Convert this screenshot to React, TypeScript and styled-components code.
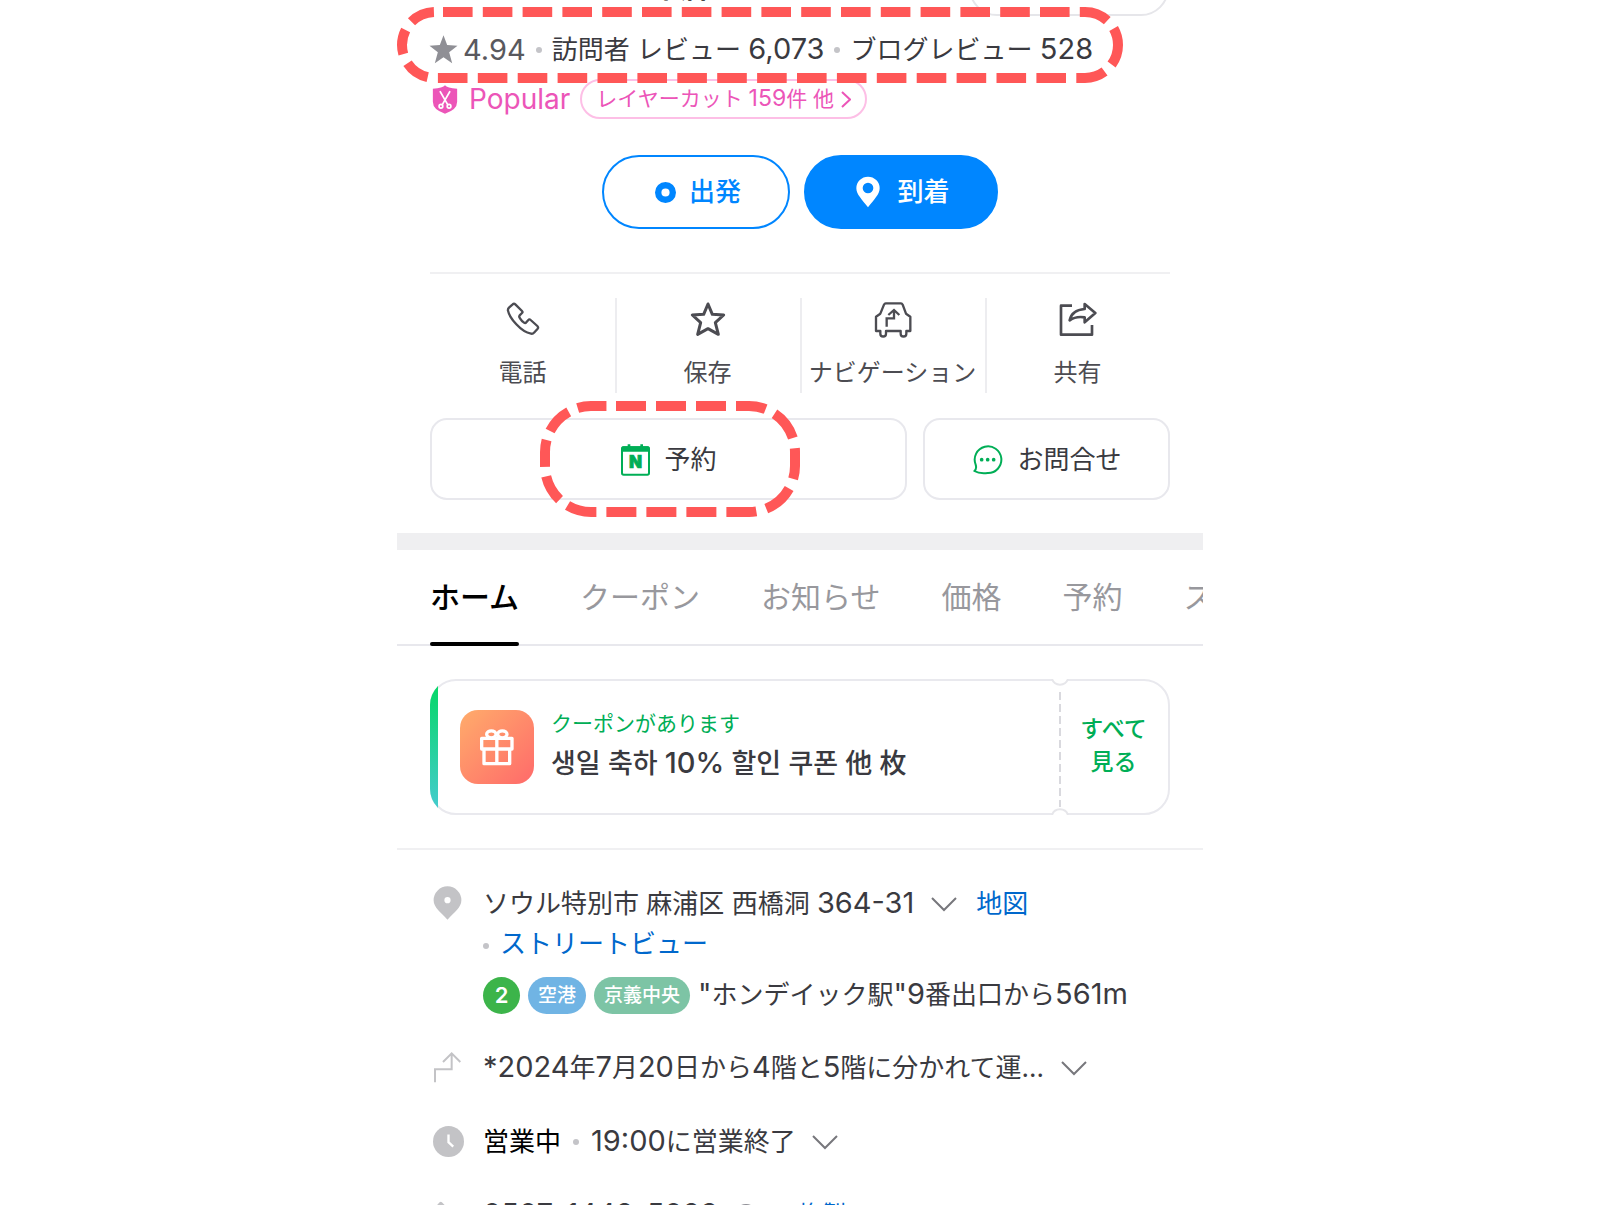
import React from "react";
import styled, { createGlobalStyle, css } from "styled-components";

const sans = `Inter, "Noto Sans CJK JP", "Noto Sans CJK KR", sans-serif`;

const GlobalStyle = createGlobalStyle`
  *, *::before, *::after { box-sizing: border-box; }
  body { margin: 0; background: #fff; color: #3a3a40; font-family: ${sans}; -webkit-font-smoothing: antialiased; }
  button { font: inherit; color: inherit; background: none; border: 0; padding: 0; cursor: pointer; white-space: nowrap; }
  a { color: inherit; text-decoration: none; }
  svg { display: block; flex: none; }
  h1, p { margin: 0; }
`;

const Shell = styled.div`
  height: 100vh;
  overflow: hidden;
`;

const Page = styled.main`
  width: 100%;
  max-width: 806px;
  margin: 0 auto;
`;

const Inset = styled.div`
  padding: 0 33px;
`;

/* Latin figures are set a little larger than the kana and kanji around them. */
const Num = styled.span<{ $size?: number }>`
  font-size: ${(p) => p.$size ?? 29}px;
  line-height: 1;
`;

/* ---------- heading ---------- */

const TitleBar = styled.header`
  display: flex;
  align-items: flex-end;
  justify-content: space-between;
  height: 16px;
  padding: 0 34px 0 255px;
`;

const Title = styled.h1`
  padding-bottom: 8px;
  font-size: 28px;
  line-height: 40px;
  font-weight: 600;
  color: #111;
`;

const TitlePill = styled.button`
  width: 200px;
  height: 56px;
  border: 2px solid #e6e6ea;
  border-radius: 28px;
`;

const Reviews = styled.div`
  position: relative;
  display: flex;
  align-items: center;
  height: 63px;
  padding: 4px 33px 0 32px;
  font-size: 26px;
  line-height: 40px;
  white-space: nowrap;
`;

const Rating = styled.span`
  display: flex;
  align-items: center;
  gap: 5px;
  color: #59595e;
`;

const Dot = styled.span<{ $gap?: number }>`
  flex: none;
  width: 6px;
  height: 6px;
  margin: 0 ${(p) => p.$gap ?? 10}px;
  border-radius: 50%;
  background: #c4c4c8;
`;

const Ring = styled.svg<{ $x: number; $y: number }>`
  position: absolute;
  left: ${(p) => p.$x}px;
  top: ${(p) => p.$y}px;
  pointer-events: none;
  z-index: 1;
`;

const Popular = styled.div`
  display: flex;
  align-items: center;
  height: 40px;
  padding: 0 35px;
  color: #ec55b8;
`;

const PopularName = styled.span`
  margin: 0 10px 0 11px;
  font-size: 28px;
  line-height: 40px;
`;

const PopularPill = styled.button`
  display: flex;
  align-items: center;
  gap: 7px;
  height: 40px;
  padding: 0 14px;
  border: 2px solid #fdbfe6;
  border-radius: 20px;
  font-size: 21px;
  line-height: 34px;
`;

const Trip = styled.div`
  display: flex;
  justify-content: center;
  gap: 14px;
  margin-top: 36px;
`;

const TripButton = styled.button<{ $filled?: boolean }>`
  display: flex;
  align-items: center;
  justify-content: center;
  gap: ${(p) => (p.$filled ? 17 : 13)}px;
  width: ${(p) => (p.$filled ? 194 : 188)}px;
  height: 74px;
  padding-left: 4px;
  border: 2px solid #0086ff;
  border-radius: 37px;
  background: ${(p) => (p.$filled ? "#0086ff" : "#fff")};
  color: ${(p) => (p.$filled ? "#fff" : "#0086ff")};
  font-size: 26px;
  line-height: 40px;
  font-weight: 500;
`;

const Rule = styled.hr<{ $gap: number }>`
  height: 2px;
  margin: ${(p) => p.$gap}px 0 0;
  border: 0;
  background: #f0f0f2;
`;

const Tools = styled.div`
  display: grid;
  grid-template-columns: repeat(4, 1fr);
  margin-top: 24px;
`;

const Tool = styled.button`
  display: flex;
  flex-direction: column;
  align-items: center;
  justify-content: space-between;
  height: 95px;
  padding: 3px 0 1px;
  font-size: 24px;
  line-height: 38px;
  color: #4c4c52;
  & + & { box-shadow: inset 2px 0 #ededf0; }
`;

const Booking = styled.div`
  position: relative;
  display: grid;
  grid-template-columns: 477fr 247fr;
  gap: 16px;
  margin-top: 25px;
`;

const BookingButton = styled.button`
  display: flex;
  align-items: center;
  justify-content: center;
  gap: 14px;
  height: 82px;
  padding: 1px 0 0 1px;
  border: 2px solid #e8e8ed;
  border-radius: 17px;
  font-size: 26px;
  line-height: 40px;
`;

const Band = styled.div`
  height: 17px;
  margin-top: 33px;
  background: #efeff1;
`;

/* ---------- tabs ---------- */

const Tabs = styled.nav`
  display: flex;
  gap: 61px;
  height: 96px;
  padding-left: 33px;
  overflow: hidden;
  box-shadow: inset 0 -2px #e8e8ed;
`;

const Tab = styled.a<{ $active?: boolean }>`
  position: relative;
  flex: none;
  font-size: 30px;
  line-height: 94px;
  color: #98989d;
  ${(p) =>
    p.$active &&
    css`
      color: #000;
      font-weight: 500;
      &::after {
        content: "";
        position: absolute;
        inset: auto 0 0;
        height: 4px;
        border-radius: 2px;
        background: #000;
      }
    `}
`;

/* ---------- coupon ---------- */

const CouponWrap = styled.div`
  position: relative;
`;

const Coupon = styled.section`
  display: flex;
  height: 136px;
  margin-top: 33px;
  border: 2px solid #e9e9ee;
  border-radius: 26px;
  background: #fff;
`;

const Stripe = styled.div`
  position: absolute;
  inset: 0;
  border-radius: 26px;
  overflow: hidden;
  pointer-events: none;
  &::before {
    content: "";
    display: block;
    width: 8px;
    height: 100%;
    background: linear-gradient(#03d862, #48cbd3);
  }
`;

const CouponBody = styled.div`
  flex: 1;
  display: flex;
  align-items: center;
  gap: 17px;
  padding-left: 28px;
`;

const GiftTile = styled.div`
  display: grid;
  place-items: center;
  width: 74px;
  height: 74px;
  border-radius: 18px;
  background: linear-gradient(135deg, #ffac6b, #ff6a6a);
`;

const CouponNote = styled.p`
  margin-bottom: 4px;
  font-size: 21px;
  line-height: 30px;
  color: #00ae56;
`;

const CouponName = styled.p`
  font-size: 27px;
  line-height: 42px;
  font-weight: 500;
`;

const SeeAll = styled.button`
  width: 109px;
  padding-bottom: 2px;
  font-size: 23px;
  line-height: 33px;
  font-weight: 500;
  color: #00ae56;
`;

const Perforation = styled.svg`
  position: absolute;
  right: 98px;
  top: 0;
`;

/* ---------- details ---------- */

const Details = styled.dl`
  display: flex;
  flex-direction: column;
  gap: 33px;
  margin: 0;
  padding: 33px 33px 0 36px;
  font-size: 26px;
  line-height: 40px;
`;

const Detail = styled.div`
  display: grid;
  grid-template-columns: 50px 1fr;
`;

const DetailIcon = styled.dt`
  display: flex;
  align-items: center;
  height: 40px;
`;

const DetailBody = styled.dd`
  margin: 0;
  padding-top: 1px;
`;

const Line = styled.div`
  display: flex;
  align-items: center;
  height: 40px;
  white-space: nowrap;
`;

const StationLine = styled(Line)`
  gap: 8px;
  height: 38px;
  margin-top: 12px;
`;

const PhoneLine = styled(Line)`
  height: 34px;
`;

const BlueLink = styled.a`
  color: #0068cc;
`;

const LineDot = styled(Dot)`
  margin: 4px 11px 0 0;
`;

const Toggle = styled.button<{ $gap: number }>`
  margin: 0 19px 0 ${(p) => p.$gap}px;
`;

const Open = styled.span`
  color: #000;
`;

const InfoButton = styled.button`
  margin: 6px 40px 0 16px;
`;

const CopyLink = styled(BlueLink)`
  padding-top: 4px;
  font-size: 24px;
`;

const Badge = styled.span<{ $color: string; $round?: boolean }>`
  height: 37px;
  min-width: 37px;
  padding: 0 10px;
  border-radius: 19px;
  background: ${(p) => p.$color};
  color: #fff;
  font-size: ${(p) => (p.$round ? 22 : 19)}px;
  line-height: 37px;
  font-weight: ${(p) => (p.$round ? 600 : 500)};
  text-align: center;
`;

/* ---------- drawings ---------- */

type DashRun = [count: number, dash: number, gap: number];

type RingProps = {
  x: number; y: number; w: number; h: number; r: number;
  start: number; runs: DashRun[];
};

/* Dashed rounded outline, drawn clockwise from `start` on its top edge. */
function DashedRing({ x, y, w, h, r, start, runs }: RingProps) {
  const a = 5;
  const R = w + a;
  const B = h + a;
  const d = `M${start} ${a}H${R - r}A${r} ${r} 0 0 1 ${R} ${a + r}V${B - r}A${r} ${r} 0 0 1 ${R - r} ${B}H${a + r}A${r} ${r} 0 0 1 ${a} ${B - r}V${a + r}A${r} ${r} 0 0 1 ${a + r} ${a}H${start}`;
  const dashes = runs.flatMap(([count, dash, gap]) =>
    Array.from({ length: count }, () => `${dash} ${gap}`)
  );
  return (
    <Ring $x={x} $y={y} width={w + 10} height={h + 10} aria-hidden>
      <path d={d} fill="none" stroke="#ff5757" strokeWidth="10" strokeDasharray={dashes.join(" ")} />
    </Ring>
  );
}

const reviewRuns: DashRun[] = [[17, 29.6, 10.2], [1, 38, 10], [17, 29.6, 10.3], [3, 25, 10]];
const bookingRuns: DashRun[] = [[4, 30, 10], [3, 31, 10.3], [5, 30, 10], [3, 27, 9.7], [1, 29, 20]];

const line = { fill: "none", stroke: "currentColor", strokeLinejoin: "round", strokeLinecap: "round" } as const;

const Chevron = () => (
  <svg width="26" height="15" viewBox="0 0 26 15" aria-hidden>
    <path d="M1 1l12 12L25 1" fill="none" stroke="#77777c" strokeWidth="2" />
  </svg>
);

const RatingStar = () => (
  <svg width="29" height="29" viewBox="0 0 86 87" aria-hidden>
    <path d="M43 1l11 29 31 2-25 20 9 33-26-18-26 18 9-33L1 32l31-2z" fill="#8f8f95" />
  </svg>
);

const ShieldIcon = () => (
  <svg width="26" height="29" viewBox="0 0 76 86" aria-hidden>
    <path d="M38 1Q44 9 74 11V50Q74 74 38 85Q2 74 2 50V11Q32 9 38 1Z" fill="#ec55b8" />
    <g fill="none" stroke="#fff" strokeWidth="5" strokeLinecap="round">
      <path d="M24 20l22 38M52 20L30 58" />
      <circle cx="26" cy="63" r="5.500" />
      <circle cx="50" cy="63" r="5.500" />
    </g>
  </svg>
);

const SmallArrow = () => (
  <svg width="10" height="17" viewBox="0 0 10 17" aria-hidden>
    <path d="M1 1l8 7.500L1 16" fill="none" stroke="#ec55b8" strokeWidth="2" />
  </svg>
);

const StartIcon = () => (
  <svg width="21" height="21" viewBox="0 0 21 21" aria-hidden>
    <circle cx="10.500" cy="10.500" r="7.300" fill="none" stroke="#0086ff" strokeWidth="6.400" />
  </svg>
);

const EndIcon = () => (
  <svg width="24" height="32" viewBox="0 0 72 94" aria-hidden>
    <path fillRule="evenodd" fill="#fff"
      d="M36 1A35 35 0 0 1 71 36C71 54 54 70 36 93C18 70 1 54 1 36A35 35 0 0 1 36 1ZM36 19a16 16 0 1 0 0 32a16 16 0 0 0 0-32Z" />
  </svg>
);

const PhoneIcon = () => (
  <svg width="36" height="36" viewBox="0 0 108 108" aria-hidden>
    <path {...line} strokeWidth="7" d="M23 10Q27 6 31 10L51 30Q54 33 51 36L44 43Q41 47 45 52 50 60 57 65 61 68 64 64L70 57Q73 53 77 57L97 75Q101 79 98 83L87 95Q84 99 78 98 56 94 34 70 12 46 9 29 8 24 12 20Z" />
  </svg>
);

const StarIcon = () => (
  <svg width="36" height="36" viewBox="0 0 108 108" aria-hidden>
    <path {...line} strokeWidth="9" d="M54 9L67 40 101 42 76 65 85 100 54 83 23 100 32 65 7 42 41 40Z" />
  </svg>
);

const CarIcon = () => (
  <svg width="38" height="38" viewBox="0 0 114 114" aria-hidden>
    <path {...line} strokeWidth="7" d="M35 7H81Q84 7 86 11L96 38 109 47V90H97V98A8 8 0 0 1 80 98V90H36V98A8 8 0 0 1 19 98V90H6V47L19 38 30 11Q32 7 35 7Z" />
    <path {...line} strokeLinecap="butt" strokeLinejoin="miter" strokeWidth="7" d="M38 77V52H60V28M43 42L60 27 76 42" />
  </svg>
);

const ShareIcon = () => (
  <svg width="38" height="36" viewBox="0 0 114 108" aria-hidden>
    <path {...line} strokeLinecap="butt" strokeWidth="8" d="M39 14H6V101H99V72" />
    <path {...line} strokeWidth="8" d="M77 9L109 36 77 64V49Q50 45 32 58Q38 27 77 24Z" />
  </svg>
);

const CalendarIcon = () => (
  <svg width="29" height="32" viewBox="0 0 87 96" aria-hidden>
    <rect x="3" y="10" width="81" height="82" rx="5" fill="none" stroke="#00ae56" strokeWidth="6" />
    <path d="M1 23V12Q1 7 6 7H20V1H28V7H58V1H66V7H81Q86 7 86 12V23Z" fill="#00ae56" />
    <text x="43.500" y="73" textAnchor="middle" fontFamily="Inter" fontWeight="900" fontSize="51"
      fill="#00ae56" stroke="#00ae56" strokeWidth="2">N</text>
  </svg>
);

const ChatIcon = () => (
  <svg width="31" height="31" viewBox="0 0 93 93" aria-hidden>
    <path {...line} stroke="#00ae56" strokeWidth="6" d="M11 62A40 40 0 1 1 47 87Q22 90 7 81Q15 75 11 62Z" />
    <g fill="#00ae56">
      <circle cx="29" cy="47" r="5.500" />
      <circle cx="47" cy="47" r="5.500" />
      <circle cx="65" cy="47" r="5.500" />
    </g>
  </svg>
);

const GiftIcon = () => (
  <svg width="36" height="40" viewBox="0 0 108 120" aria-hidden>
    <g fill="none" stroke="#fff" strokeWidth="10" strokeLinejoin="round">
      <rect x="8" y="34" width="91" height="32" />
      <path d="M15 66V110H92V66M53.500 34V110" />
      <ellipse cx="37" cy="22" rx="14" ry="10.500" />
      <ellipse cx="70" cy="22" rx="14" ry="10.500" />
    </g>
  </svg>
);

const PlaceIcon = () => (
  <svg width="29" height="34" viewBox="0 0 82 98" aria-hidden>
    <path fillRule="evenodd" fill="#c3c3c6"
      d="M41 1A40 40 0 0 1 81 41C81 62 60 76 41 97C22 76 1 62 1 41A40 40 0 0 1 41 1ZM41 32a9 9 0 1 0 0 18a9 9 0 0 0 0-18Z" />
  </svg>
);

const RouteIcon = () => (
  <svg width="28" height="32" viewBox="0 0 84 96" aria-hidden>
    <path d="M6 94V55H56V8M30 33L56 7 82 33" fill="none" stroke="#c3c3c6" strokeWidth="6" />
  </svg>
);

const ClockIcon = () => (
  <svg width="31" height="31" viewBox="0 0 92 92" aria-hidden>
    <circle cx="46" cy="46" r="46" fill="#c3c3c6" />
    <path d="M46 25V48L60 61" fill="none" stroke="#fff" strokeWidth="7" />
  </svg>
);

const HandsetIcon = () => (
  <svg width="31" height="31" viewBox="0 0 108 108" aria-hidden>
    <path fill="#c3c3c6" d="M23 8Q27 4 31 8L53 30 43 46Q46 58 59 66L72 54 99 78 85 97Q82 100 76 99Q18 84 9 32Q8 27 12 20Z" />
  </svg>
);

const InfoIcon = () => (
  <svg width="24" height="24" viewBox="0 0 24 24" aria-hidden>
    <circle cx="12" cy="12" r="11" fill="none" stroke="#8f8f95" strokeWidth="2" />
    <path d="M12 10V18M12 6V8" stroke="#8f8f95" strokeWidth="2" />
  </svg>
);

const CouponPerforation = () => (
  <Perforation width="24" height="136" aria-hidden>
    <rect x="4" y="0" width="16" height="2" fill="#fff" />
    <rect x="4" y="134" width="16" height="2" fill="#fff" />
    <g fill="none" stroke="#e6e6ea" strokeWidth="2">
      <path d="M4 0A8.500 8.500 0 0 0 20 0" />
      <path d="M4 136A8.500 8.500 0 0 1 20 136" />
      <path d="M12 13V128" strokeDasharray="8 4" stroke="#d9d9de" />
    </g>
  </Perforation>
);

/* ---------- page ---------- */

const tools = [
  { label: "電話", icon: <PhoneIcon /> },
  { label: "保存", icon: <StarIcon /> },
  { label: "ナビゲーション", icon: <CarIcon /> },
  { label: "共有", icon: <ShareIcon /> },
];

const tabs = ["ホーム", "クーポン", "お知らせ", "価格", "予約", "スタイル"];

export default function App() {
  return (
    <Shell>
      <GlobalStyle />
      <Page>
        <TitleBar>
          <Title>本店</Title>
          <TitlePill aria-label="翻訳" />
        </TitleBar>
        <Reviews>
          <Rating><RatingStar /><Num>4.94</Num></Rating>
          <Dot />
          <a href="#visitors">訪問者 レビュー <Num>6,073</Num></a>
          <Dot />
          <a href="#blogs">ブログレビュー <Num>528</Num></a>
          <DashedRing x={0} y={-9} w={716} h={66} r={33} start={46} runs={reviewRuns} />
        </Reviews>
        <Popular>
          <ShieldIcon />
          <PopularName>Popular</PopularName>
          <PopularPill>
            <span>レイヤーカット <Num $size={23}>159</Num>件 他</span>
            <SmallArrow />
          </PopularPill>
        </Popular>
        <Inset>
          <Trip>
            <TripButton><StartIcon />出発</TripButton>
            <TripButton $filled><EndIcon />到着</TripButton>
          </Trip>
          <Rule $gap={43} />
          <Tools>
            {tools.map((t) => (
              <Tool key={t.label}>{t.icon}<span>{t.label}</span></Tool>
            ))}
          </Tools>
          <Booking>
            <BookingButton><CalendarIcon />予約</BookingButton>
            <BookingButton><ChatIcon />お問合せ</BookingButton>
            <DashedRing x={110} y={-17} w={250} h={106} r={46} start={76} runs={bookingRuns} />
          </Booking>
        </Inset>
        <Band />
        <Tabs>
          {tabs.map((t, i) => (
            <Tab key={t} href="#" $active={i === 0}>{t}</Tab>
          ))}
        </Tabs>
        <Inset>
          <CouponWrap>
            <Coupon>
              <CouponBody>
                <GiftTile><GiftIcon /></GiftTile>
                <div>
                  <CouponNote>クーポンがあります</CouponNote>
                  <CouponName>생일 축하 <Num>10%</Num> 할인 쿠폰 他 枚</CouponName>
                </div>
              </CouponBody>
              <SeeAll>すべて<br />見る</SeeAll>
            </Coupon>
            <Stripe />
            <CouponPerforation />
          </CouponWrap>
        </Inset>
        <Rule $gap={33} />
        <Details>
          <Detail>
            <DetailIcon><PlaceIcon /></DetailIcon>
            <DetailBody>
              <Line>
                <span>ソウル特別市 麻浦区 西橋洞 <Num>364-31</Num></span>
                <Toggle $gap={17} aria-label="住所"><Chevron /></Toggle>
                <BlueLink href="#map">地図</BlueLink>
              </Line>
              <Line><LineDot /><BlueLink href="#street">ストリートビュー</BlueLink></Line>
              <StationLine>
                <Badge $color="#3cb44a" $round>2</Badge>
                <Badge $color="#70b4e4">空港</Badge>
                <Badge $color="#7dc4a5">京義中央</Badge>
                <span>
                  <Num>"</Num>ホンデイック駅<Num>"9</Num>番出口から<Num>561m</Num>
                </span>
              </StationLine>
            </DetailBody>
          </Detail>
          <Detail>
            <DetailIcon><RouteIcon /></DetailIcon>
            <DetailBody>
              <Line>
                <span>
                  <Num>*2024</Num>年<Num>7</Num>月<Num>20</Num>日から<Num>4</Num>階と<Num>5</Num>階に分かれて運...
                </span>
                <Toggle $gap={17} aria-label="行き方"><Chevron /></Toggle>
              </Line>
            </DetailBody>
          </Detail>
          <Detail>
            <DetailIcon><ClockIcon /></DetailIcon>
            <DetailBody>
              <Line>
                <Open>営業中</Open>
                <Dot $gap={12} />
                <span><Num>19:00</Num>に営業終了</span>
                <Toggle $gap={16} aria-label="営業時間"><Chevron /></Toggle>
              </Line>
            </DetailBody>
          </Detail>
          <Detail>
            <DetailIcon><HandsetIcon /></DetailIcon>
            <DetailBody>
              <PhoneLine>
                <Num>0507-1442-5023</Num>
                <InfoButton aria-label="案内"><InfoIcon /></InfoButton>
                <CopyLink href="#copy">複製</CopyLink>
              </PhoneLine>
            </DetailBody>
          </Detail>
        </Details>
      </Page>
    </Shell>
  );
}
